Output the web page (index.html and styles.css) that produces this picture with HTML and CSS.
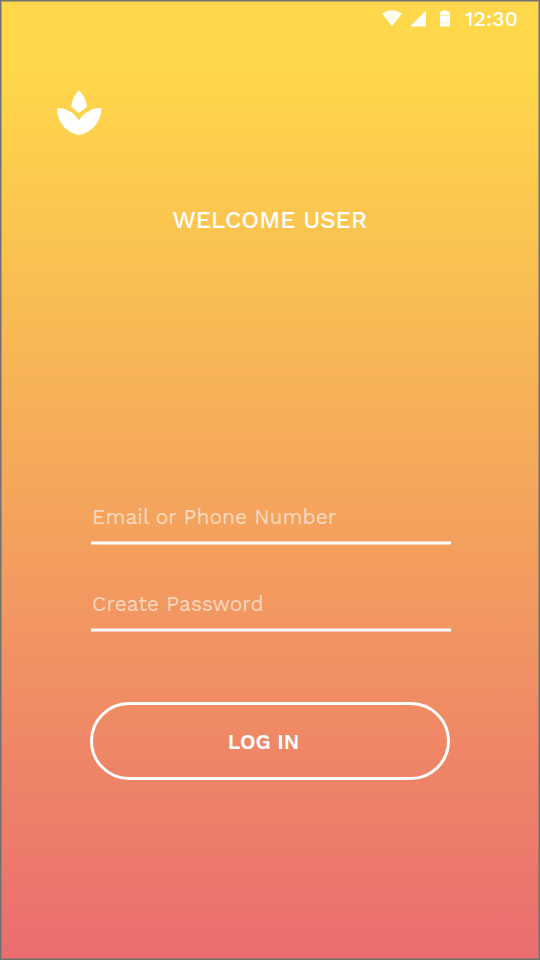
FILE: index.html
```html
<!DOCTYPE html>
<html lang="en">
<head>
<meta charset="utf-8">
<title>Welcome</title>
<link rel="stylesheet" href="styles.css">
</head>
<body>
<main class="screen">
  <header class="status">
    <svg class="wifi" viewBox="0 0 20 17"><path d="M0 3.5Q10-3 20 3.5L10 16.5Z"/></svg>
    <svg class="signal" viewBox="0 0 16 17"><path d="M0 16.5H16V.5Z"/></svg>
    <svg class="battery" viewBox="0 0 10 17"><path d="M2.5.5H7.5V1.8H10V16.5H0V1.8H2.5Z"/><path class="mark" d="M0 5.5H10M0 12.8H10"/></svg>
    <span class="time">12:30</span>
  </header>
  <svg class="logo" viewBox="0 0 46 45"><path d="M23 .3C18.8 4.5 15.8 10 15.4 17.2Q19.5 19.5 23 23.2Q26.7 19.5 30.8 17.2C30.4 10 27.3 4.5 23 .3Z"/><path d="M1 18C10 18 18.5 22.5 23 30.5C27.5 22.5 36 18 45.3 18C45.3 32 36 42.5 23 45C10 42.5 1 32 1 18Z"/></svg>
  <h1 class="title">WELCOME USER</h1>
  <form class="form">
    <label class="field"><span class="hint">Email or Phone Number</span></label>
    <label class="field"><span class="hint">Create Password</span></label>
    <button class="login" type="button"><span>LOG IN</span></button>
  </form>
</main>
</body>
</html>
```
FILE: styles.css
```css
* { box-sizing: border-box; }
body { margin: 0; }
.screen {
  display: flex;
  flex-direction: column;
  width: 540px;
  height: 960px;
  border: 1px solid #707070;
  box-shadow: inset 0 0 0 1px rgba(112, 112, 112, .5);
  background: linear-gradient(#ffd74a 72px, #f4a35d 515px, #ea6d70 960px);
  color: #fff;
  font-family: "Work Sans", Inter, sans-serif;
}
svg { display: block; fill: #fff; }
.status {
  display: flex;
  height: 35px;
  padding: 9px 18px 0 0;
  justify-content: flex-end;
}
.wifi { width: 20px; height: 17px; opacity: .9; }
.signal { width: 16px; height: 17px; margin-left: 8px; }
.battery { width: 10px; height: 17px; margin-left: 14px; }
.mark { stroke: #ffd64a; stroke-width: .8; opacity: .6; }
.time {
  width: 56px;
  margin-left: 15px;
  font-size: 21px;
  line-height: 18px;
  font-weight: 500;
  letter-spacing: .1px;
  white-space: nowrap;
}
.logo { width: 46px; height: 45px; margin: 54px 0 0 55px; }
.title {
  margin: 70px 0 0 171.5px;
  font-size: 24px;
  line-height: 30px;
  font-weight: 500;
  letter-spacing: 0;
  white-space: nowrap;
}
.form { width: 360px; margin: 267px 0 0 90px; }
.field {
  display: block;
  height: 42px;
  margin-bottom: 45px;
  border-bottom: 2px solid #fff;
  box-shadow: 0 1px rgba(255, 255, 255, .5), inset 0 -1px rgba(255, 255, 255, .5);
}
.hint {
  display: block;
  padding: 1px 0 0 1px;
  font-size: 21px;
  line-height: 28px;
  font-weight: 400;
  opacity: .6;
}
.login {
  display: block;
  width: 360px;
  height: 78px;
  margin: 71px 0 0 -1px;
  padding: 2px 13px 0 0;
  border: 3px solid #fff;
  border-radius: 39px;
  background: none;
  color: #fff;
  font: 600 21px/24px "Work Sans", Inter, sans-serif;
}
```
